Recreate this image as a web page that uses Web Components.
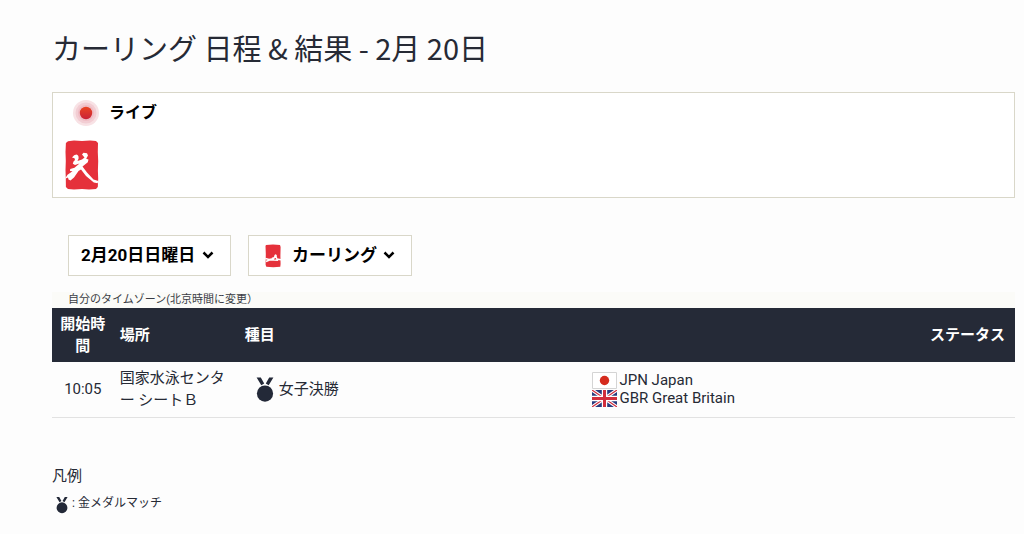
<!DOCTYPE html>
<html lang="ja">
<head>
<meta charset="utf-8">
<meta name="viewport" content="width=device-width, initial-scale=1">
<title>カーリング 日程 &amp; 結果</title>
<style>
body{margin:0;background:#fdfdfd;color:#262a35;font-family:Roboto,"Noto Sans CJK JP",sans-serif;font-size:15px}
</style>
</head>
<body>
<schedule-page>
  <live-panel slot="live">ライブ</live-panel>
  <filter-bar slot="filters"></filter-bar>
  <schedule-table slot="table"></schedule-table>
  <medal-legend slot="legend"></medal-legend>
</schedule-page>
<script>
const define = (name, html) => {
  const template = document.createElement('template');
  template.innerHTML = html;
  customElements.define(name, class extends HTMLElement {
    constructor() {
      super();
      this.attachShadow({ mode: 'open' }).append(template.content.cloneNode(true));
    }
    connectedCallback() {
      const select = this.shadowRoot.querySelector('select');
      if (!select) return;
      select.setAttribute('aria-label', this.getAttribute('label'));
      select.replaceChildren(new Option(this.getAttribute('value')));
    }
  });
};

define('medal-icon', `
<style>:host{display:inline-block;width:18px;height:25px}svg{display:block;width:100%;height:100%}</style>
<svg viewBox="0 0 18 25" aria-hidden="true" fill="#232938"><path d="M.6.4h4.200l3.400 6-2.900 1.800zM17.400.4h-4.200l-3.400 6 2.900 1.800z"/><circle cx="9" cy="16.600" r="8.100"/></svg>`);

define('live-dot', `
<style>:host{display:block;width:26px;height:26px}svg{display:block}</style>
<svg width="26" height="26" viewBox="0 0 26 26" aria-hidden="true">
<defs><linearGradient id="g" x2="0" y2="1"><stop stop-color="#ea4422"/><stop offset="1" stop-color="#c92238"/></linearGradient></defs>
<circle cx="13" cy="13" r="13" fill="#f8e2e5"/><circle cx="13" cy="13" r="10.500" fill="#f2cdd3"/><circle cx="13" cy="13" r="8" fill="#efbcc4"/><circle cx="13" cy="13" r="6.200" fill="url(#g)"/></svg>`);

define('beijing-seal', `
<style>:host{display:block;width:34px;height:50px}svg{display:block}</style>
<svg width="34" height="50" viewBox="0 0 34 50" aria-hidden="true">
<path fill="#e5313b" d="M3 1.200 9 .6l8 .4L25 .5l6 .6 2 2-.2 9 .4 9-.3 10 .3 8-.4 8-1.800 2-7 .3-7-.3-8 .5-6-.5-2.100-2L.8 39 .5 30l.3-9-.3-9L.9 3z"/>
<path fill="#fff" d="M7 17.500Q9 14.800 11.500 14.600 13.800 15 13.600 18.500L12.500 21 17 19.500 19.500 17.500 17 14.500 18.500 12.700 22 13.300 23 15.500 21.200 18.700 23.500 19.600 22.800 22.200 17.500 26.500 22 32.500 28.500 39.500 33.400 41 32.600 43.300 28.800 42.600 21 36 16 29.500 13.500 31 9 37.500 5.500 40.500 3.500 39.500 3 37.500 0 38.800 2.500 34.800 7.500 31.200 5 31 5.200 29 9.500 27.800 14.500 23.500 10 25 7.800 23.800 8.500 21.500 10 20 9.500 18.200z"/></svg>`);

define('curling-seal', `
<style>:host{display:block;width:16px;height:24px}svg{display:block}</style>
<svg width="16" height="24" viewBox="0 0 16 24" aria-hidden="true">
<path fill="#e5313b" d="M1 .9 8 .5l7 .4.6 2-.2 9 .2 8-.3 2.800-7 .5-7-.4-.7-2L.8 10 .5 2z"/>
<path fill="none" stroke="#fff" stroke-width="1.500" d="m.3 14.500 3.700 1 4.500-.8 2-3 1.500 3.300 4 .8M1 17.500l4-1.800 8 .5M7 14.500l4-1.500"/><circle cx="10.600" cy="11.700" r="1.200" fill="#fff"/></svg>`);

define('live-panel', `
<style>
:host{display:flex;flex-direction:column;gap:14px;box-sizing:border-box;padding:7px 12px;border:1px solid #d9d7c9;background:#fff;color:#000}
.top{display:flex;align-items:center;gap:10px;padding-left:8px}
strong{font-size:16px;line-height:26px}
</style>
<div class="top"><live-dot></live-dot><strong><slot></slot></strong></div>
<beijing-seal></beijing-seal>`);

define('choice-menu', `
<style>
:host{display:block;position:relative}
select{display:block;appearance:none;box-sizing:border-box;height:41px;margin:0;padding:0 34px 2px 12px;border:1px solid #d9d7c9;border-radius:0;background:#fff;color:#000;font:700 17px/24px Roboto,"Noto Sans CJK JP",sans-serif}
:host([icon]) select{padding-left:43px}
.chevron{position:absolute;right:17px;top:16px;pointer-events:none}
::slotted(*){position:absolute;left:17px;top:9px;pointer-events:none}
</style>
<select></select><slot></slot>
<svg class="chevron" width="12" height="8" viewBox="0 0 12 8" aria-hidden="true"><path d="m1.500 1.500 4.500 4.500 4.500-4.500" fill="none" stroke="#000" stroke-width="2.500"/></svg>`);

define('filter-bar', `
<style>:host{display:flex;flex-wrap:wrap;gap:17px;padding-left:16px}</style>
<choice-menu label="日付" value="2月20日日曜日"></choice-menu>
<choice-menu icon label="競技" value="カーリング"><curling-seal></curling-seal></choice-menu>`);

define('country-row', `
<style>:host{display:flex;align-items:center;gap:2px;line-height:18px}::slotted(svg){display:block;flex:none}</style>
<slot name="flag"></slot><span><slot></slot></span>`);

define('schedule-table', `
<style>
:host{display:block}
table{width:100%;border-collapse:collapse;table-layout:fixed;line-height:22px}
caption{box-sizing:border-box;padding-left:16px;background:#fbfbf8;text-align:left;font-size:11px;line-height:16px;color:#3a3d45}
th{height:54px;background:#252a37;color:#fff;font-weight:700}
th,td{box-sizing:border-box;padding:0 6px;text-align:left;vertical-align:middle}
td{height:55px;border-bottom:1px solid #e2e2e2}
th:first-child,td:first-child{text-align:center}
th:last-child{text-align:right;padding-right:10px}
.time{width:6.4%}.place{width:13%}.event{width:36.1%}
.match{display:flex;align-items:center;gap:5px;padding-left:11px}
</style>
<table>
<caption>自分のタイムゾーン(北京時間に変更）</caption>
<colgroup><col class="time"><col class="place"><col class="event"><col><col></colgroup>
<thead><tr><th scope="col">開始時間</th><th scope="col">場所</th><th scope="col">種目</th><th></th><th scope="col">ステータス</th></tr></thead>
<tbody><tr><td>10:05</td><td>国家水泳センター シートＢ</td>
<td><div class="match"><medal-icon></medal-icon><span>女子決勝</span></div></td>
<td>
<country-row><svg slot="flag" width="25" height="17" viewBox="0 0 25 17" aria-hidden="true"><path fill="#fff" stroke="#d4d4d4" d="M.5.5h24v16H.5z"/><circle cx="12.500" cy="8.500" r="4.700" fill="#d52b1e"/></svg>JPN Japan</country-row>
<country-row><svg slot="flag" width="25" height="17" viewBox="0 0 25 17" aria-hidden="true"><path fill="#283a7d" d="M0 0h25v17H0z"/><path stroke="#fff" stroke-width="3.400" d="m0 0 25 17M25 0 0 17"/><path stroke="#d12d3c" stroke-width="1.200" d="m0 0 25 17M25 0 0 17"/><path stroke="#fff" stroke-width="5.400" d="M12.500 0v17M0 8.500h25"/><path stroke="#d12d3c" stroke-width="3" d="M12.500 0v17M0 8.500h25"/></svg>GBR Great Britain</country-row>
</td><td></td></tr></tbody>
</table>`);

define('medal-legend', `
<style>
:host{display:block}
h2{margin:0;font-size:15px;font-weight:400;line-height:24px}
p{display:flex;align-items:center;gap:4px;margin:3px 0 0;padding-left:4px;font-size:12px;line-height:24px}
medal-icon{width:12px;height:18px;margin-top:4px}
</style>
<h2>凡例</h2><p><medal-icon></medal-icon><span>: 金メダルマッチ</span></p>`);

define('schedule-page', `
<style>
:host{display:block;padding:26px 9px 16px 52px}
h1{margin:0 0 24px;font:400 29px/42px "Noto Sans CJK JP",sans-serif}
slot{display:block}
.filters{margin-top:37px}.table{margin-top:16px}.legend{margin-top:46px}
</style>
<h1>カーリング 日程 &amp; 結果 - 2月 20日</h1>
<slot name="live"></slot>
<slot name="filters" class="filters"></slot>
<slot name="table" class="table"></slot>
<slot name="legend" class="legend"></slot>`);
</script>
</body>
</html>
